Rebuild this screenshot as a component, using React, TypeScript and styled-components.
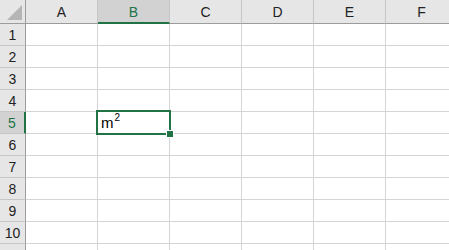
import { Fragment } from "react";
import styled, { createGlobalStyle } from "styled-components";

const GlobalStyle = createGlobalStyle`
html, body {
  margin: 0;
  padding: 0;
  background: #ffffff;
  overflow: hidden;
}
`;

const COLS = ["A", "B", "C", "D", "E", "F"];
const ROWS = [1, 2, 3, 4, 5, 6, 7, 8, 9, 10];
const ACTIVE_COL = "B";
const ACTIVE_ROW = 5;

const Sheet = styled.div`
display: grid;
grid-template-columns: 26px repeat(6, 72px);
grid-template-rows: 24px repeat(11, 22px);
width: 449px;
height: 250px;
overflow: hidden;
font-family: "Liberation Sans", Arial, sans-serif;
`;

const Corner = styled.div`
position: relative;
background: #e6e6e6;
border-right: 1px solid #9c9c9c;
border-bottom: 1px solid #9c9c9c;
box-sizing: border-box;
&::after {
  content: "";
  position: absolute;
  right: 3px;
  bottom: 3px;
  width: 0;
  height: 0;
  border-left: 15px solid transparent;
  border-bottom: 15px solid #b5b5b5;
}
`;

const ColHeader = styled.div<{ $active?: boolean }>`
display: flex;
align-items: center;
justify-content: center;
box-sizing: border-box;
padding-top: 1px;
background: ${(p) => (p.$active ? "#d2d2d2" : "#e6e6e6")};
border-right: 1px solid #c6c6c6;
border-bottom: ${(p) => (p.$active ? "2px solid #217346" : "1px solid #9c9c9c")};
color: ${(p) => (p.$active ? "#217346" : "#222222")};
font-size: 14px;
`;

const RowHeader = styled.div<{ $active?: boolean }>`
display: flex;
align-items: center;
justify-content: center;
box-sizing: border-box;
background: ${(p) => (p.$active ? "#d2d2d2" : "#e6e6e6")};
border-bottom: 1px solid #c6c6c6;
border-right: ${(p) => (p.$active ? "2px solid #217346" : "1px solid #9c9c9c")};
color: ${(p) => (p.$active ? "#217346" : "#222222")};
font-size: 14px;
`;

const Cell = styled.div`
position: relative;
box-sizing: border-box;
border-right: 1px solid #d4d4d4;
border-bottom: 1px solid #d4d4d4;
display: flex;
align-items: flex-end;
padding: 0 0 2px 3px;
font-size: 15px;
color: #000000;
`;

const Selection = styled.div`
position: absolute;
z-index: 2;
left: -2px;
top: -2px;
right: -2px;
bottom: -2px;
border: 2px solid #217346;
box-sizing: border-box;
pointer-events: none;
`;

const FillHandle = styled.div`
position: absolute;
right: -5px;
bottom: -5px;
width: 6px;
height: 6px;
background: #217346;
border: 1px solid #ffffff;
`;

const Sup = styled.sup`
font-size: 10px;
line-height: 0;
position: relative;
top: -1px;
margin-left: 1px;
`;

export default function App() {
  return (
    <>
      <GlobalStyle />
      <Sheet>
        <Corner />
        {COLS.map((c) => (
          <ColHeader key={c} $active={c === ACTIVE_COL}>
            {c}
          </ColHeader>
        ))}
        {ROWS.map((r) => (
          <Fragment key={r}>
            <RowHeader $active={r === ACTIVE_ROW}>{r}</RowHeader>
            {COLS.map((c) => {
              const active = c === ACTIVE_COL && r === ACTIVE_ROW;
              return (
                <Cell key={c}>
                  {active && (
                    <>
                      <span>
                        m<Sup>2</Sup>
                      </span>
                      <Selection>
                        <FillHandle />
                      </Selection>
                    </>
                  )}
                </Cell>
              );
            })}
          </Fragment>
        ))}
        {/* next row is only partly visible at the bottom edge */}
        <RowHeader />
        {COLS.map((c) => (
          <Cell key={"last" + c} />
        ))}
      </Sheet>
    </>
  );
}
